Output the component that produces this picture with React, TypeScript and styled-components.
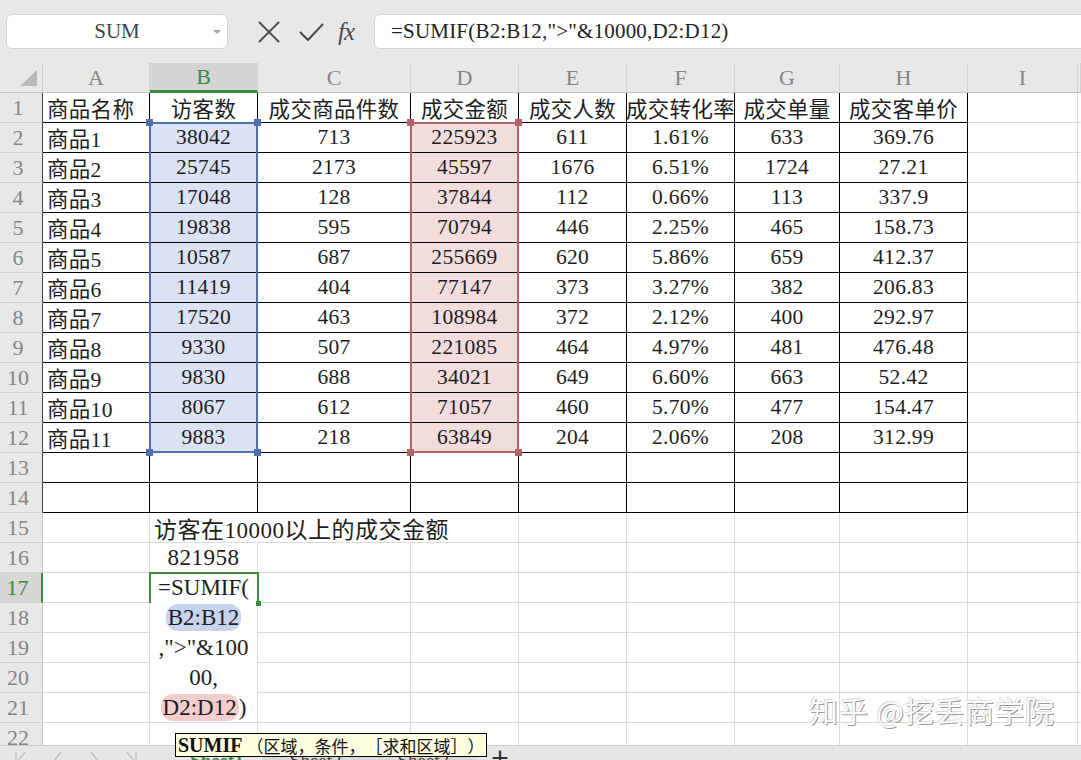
import React from 'react';
import styled, { createGlobalStyle } from 'styled-components';

const GlobalStyle = createGlobalStyle`
  html, body {
    margin: 0;
    padding: 0;
    background: #fff;
    overflow: hidden;
  }
  body {
    font-family: "Liberation Serif", "Noto Sans CJK SC", serif;
  }
`;

const COLS = [107, 108, 153, 108, 108, 108, 105, 128, 110];
const LETTERS = ['A', 'B', 'C', 'D', 'E', 'F', 'G', 'H', 'I'];
const HEAD_W = 43;
const HEAD_H = 30;
const ROW_H = 30;
const GRID = '#dadada';
const INK = '#1e1e1e';
const GREEN = '#3d8b40';
const BLUE = '#4f6fb3';
const BLUE_FILL = '#dae2f3';
const RED = '#b3646a';
const RED_FILL = '#f3dcdc';

const colLeft = (c: number): number => HEAD_W + COLS.slice(0, c).reduce((a, b) => a + b, 0);
const rowTop = (r: number): number => HEAD_H + (r - 1) * ROW_H;

const ROWS = [
  ['商品名称', '访客数', '成交商品件数', '成交金额', '成交人数', '成交转化率', '成交单量', '成交客单价'],
  ['商品1', '38042', '713', '225923', '611', '1.61%', '633', '369.76'],
  ['商品2', '25745', '2173', '45597', '1676', '6.51%', '1724', '27.21'],
  ['商品3', '17048', '128', '37844', '112', '0.66%', '113', '337.9'],
  ['商品4', '19838', '595', '70794', '446', '2.25%', '465', '158.73'],
  ['商品5', '10587', '687', '255669', '620', '5.86%', '659', '412.37'],
  ['商品6', '11419', '404', '77147', '373', '3.27%', '382', '206.83'],
  ['商品7', '17520', '463', '108984', '372', '2.12%', '400', '292.97'],
  ['商品8', '9330', '507', '221085', '464', '4.97%', '481', '476.48'],
  ['商品9', '9830', '688', '34021', '649', '6.60%', '663', '52.42'],
  ['商品10', '8067', '612', '71057', '460', '5.70%', '477', '154.47'],
  ['商品11', '9883', '218', '63849', '204', '2.06%', '208', '312.99'],
];

const Page = styled.div`
  position: relative;
  width: 1081px;
  height: 760px;
  overflow: hidden;
  display: flex;
  flex-direction: column;
  background: #fff;
`;

const Toolbar = styled.div`
  height: 63px;
  flex: none;
  display: flex;
  align-items: center;
  padding-left: 6px;
  background: #e8e8e8;
`;

const NameBox = styled.div`
  position: relative;
  box-sizing: border-box;
  width: 222px;
  height: 35px;
  background: #fff;
  border: 1px solid #d4d4d4;
  border-radius: 6px;
  display: flex;
  align-items: center;
  justify-content: center;
  font-size: 21px;
  color: #444;
`;

const DropArrow = styled.span`
  position: absolute;
  right: 6px;
  top: 15px;
  width: 0;
  height: 0;
  border-left: 4px solid transparent;
  border-right: 4px solid transparent;
  border-top: 4px solid #a8a8a8;
`;

const ToolIcon = styled.svg<{ $gap: number }>`
  flex: none;
  margin-left: ${p => p.$gap}px;
`;

const Fx = styled.span`
  margin-left: 14px;
  width: 24px;
  font-size: 25px;
  font-style: italic;
  color: #4a4a4a;
  letter-spacing: -1px;
`;

const FormulaBox = styled.div`
  flex: 1;
  box-sizing: border-box;
  height: 35px;
  margin-left: 12px;
  margin-right: -8px;
  padding-left: 16px;
  background: #fff;
  border: 1px solid #d4d4d4;
  border-radius: 6px;
  display: flex;
  align-items: center;
  font-size: 21px;
  letter-spacing: 0.2px;
  color: #222;
  white-space: nowrap;
`;

const SheetArea = styled.div`
  position: relative;
  flex: none;
  height: 682px;
  overflow: hidden;
`;

const Grid = styled.div`
  display: grid;
  grid-template-columns: ${HEAD_W}px ${COLS.map(w => `${w}px`).join(' ')} 1fr;
  grid-auto-rows: ${ROW_H}px;
`;

const Corner = styled.div`
  box-sizing: border-box;
  background: #e8e8e8;
  border-right: 1px solid #cfcfcf;
  border-bottom: 1px solid #c4c4c4;
  display: flex;
  align-items: flex-end;
  justify-content: flex-end;
  padding: 0 5px 6px 0;
`;

const ColHead = styled.div<{ $active?: boolean }>`
  box-sizing: border-box;
  background: ${p => (p.$active ? '#d4d4d4' : '#e8e8e8')};
  border-right: 1px solid #d2d2d2;
  border-bottom: ${p => (p.$active ? `3px solid ${GREEN}` : '1px solid #c4c4c4')};
  display: flex;
  align-items: center;
  justify-content: center;
  font-size: 22px;
  color: ${p => (p.$active ? GREEN : '#858585')};
`;

const RowHead = styled.div<{ $active?: boolean; $dark?: boolean }>`
  box-sizing: border-box;
  background: ${p => (p.$active ? '#d6d6d6' : '#e8e8e8')};
  border-bottom: 1px solid #d2d2d2;
  border-right: ${p => (p.$active ? `2px solid ${GREEN}` : `1px solid ${p.$dark ? '#444' : '#c4c4c4'}`)};
  display: flex;
  align-items: center;
  justify-content: center;
  padding-right: 6px;
  font-size: 22px;
  color: ${p => (p.$active ? GREEN : '#858585')};
`;

const Cell = styled.div<{ $right: string; $bottom: string; $left?: boolean; $fill?: string; $big?: boolean; $over?: boolean }>`
  position: relative;
  z-index: ${p => (p.$over ? 2 : 'auto')};
  box-sizing: border-box;
  border-right: 1px solid ${p => p.$right};
  border-bottom: 1px solid ${p => p.$bottom};
  background: ${p => p.$fill || '#fff'};
  display: flex;
  align-items: center;
  justify-content: ${p => (p.$left ? 'flex-start' : 'center')};
  padding: 0 ${p => (p.$left ? '4px' : '0')};
  font-size: ${p => (p.$big ? 23 : 21.5)}px;
  letter-spacing: ${p => (p.$big ? '0.5px' : '0.3px')};
  color: ${INK};
  white-space: nowrap;
  overflow: visible;
`;

const RangeFrame = styled.div<{ $color: string }>`
  position: absolute;
  z-index: 3;
  box-sizing: border-box;
  border: 2px solid ${p => p.$color};
  pointer-events: none;
`;

const Handle = styled.span<{ $color: string; $x: 'l' | 'r'; $y: 't' | 'b' }>`
  position: absolute;
  width: 7px;
  height: 7px;
  background: ${p => p.$color};
  ${p => (p.$x === 'l' ? 'left: -5px;' : 'right: -5px;')}
  ${p => (p.$y === 't' ? 'top: -5px;' : 'bottom: -5px;')}
`;

const Editor = styled.div`
  position: absolute;
  z-index: 4;
  box-sizing: border-box;
  background: #fff;
  border-right: 1px solid ${GRID};
  font-size: 23px;
  color: ${INK};
`;

const EditLine = styled.div`
  height: 30px;
  line-height: 30px;
  text-align: center;
  white-space: nowrap;
`;

const Ref = styled.span<{ $tone: string }>`
  background: ${p => p.$tone};
  border-radius: 12px;
  padding: 1px 2px;
`;

const ActiveFrame = styled.div`
  position: absolute;
  z-index: 5;
  box-sizing: border-box;
  border: 2px solid ${GREEN};
  border-bottom: none;
  pointer-events: none;
`;

const ActiveHandle = styled.span`
  position: absolute;
  right: -4px;
  bottom: -3px;
  width: 5px;
  height: 5px;
  background: ${GREEN};
`;

const Watermark = styled.div`
  position: absolute;
  z-index: 6;
  right: 26px;
  bottom: 14px;
  font-family: "Noto Sans CJK SC", sans-serif;
  font-size: 29px;
  letter-spacing: 1px;
  color: #fbfbfb;
  text-shadow: 1px 1px 0 #9c9c9c, -1px -1px 0 #dedede;
`;

const TabBar = styled.div`
  flex: none;
  height: 40px;
  box-sizing: border-box;
  background: #e6e6e6;
  border-top: 1px solid #cdcdcd;
  display: flex;
  align-items: flex-start;
  padding: 4px 0 0 14px;
`;

const NavGroup = styled.div`
  display: flex;
  gap: 20px;
  width: 150px;
`;

const Tab = styled.div<{ $active?: boolean }>`
  padding: ${p => (p.$active ? '0 18px' : '0 28px')};
  height: 30px;
  font-size: 19px;
  font-weight: ${p => (p.$active ? 700 : 400)};
  color: ${p => (p.$active ? GREEN : '#444')};
  background: ${p => (p.$active ? '#e6e6e6' : '#d9d9d9')};
  margin-left: ${p => (p.$active ? '8px' : '0')};
`;

const AddTab = styled.div`
  margin: -3px 0 0 14px;
  font-family: "Liberation Sans", sans-serif;
  font-size: 30px;
  font-weight: 300;
  line-height: 22px;
  color: #333;
`;

const Tip = styled.div`
  position: absolute;
  z-index: 10;
  left: 175px;
  top: 733px;
  height: 24px;
  box-sizing: border-box;
  background: #ffffe1;
  border: 1px solid #000;
  padding: 0 2px;
  display: flex;
  align-items: center;
  white-space: nowrap;
  font-size: 17px;
  color: #111;
  text-spacing-trim: space-all;
`;

const TipName = styled.b`
  font-size: 20px;
  margin-right: 4px;
`;

function Chevron({ double, flip }: { double?: boolean; flip?: boolean }): JSX.Element {
  return (
    <svg width="16" height="22" viewBox="0 0 16 22" style={{ transform: flip ? 'scaleX(-1)' : undefined }}>
      <polyline points="11,2 4,11 11,20" fill="none" stroke="#c4c4c4" strokeWidth="1.5" />
      {double && <line x1="2" y1="2" x2="2" y2="20" stroke="#c4c4c4" strokeWidth="1.5" />}
    </svg>
  );
}

function App(): JSX.Element {
  const renderCell = (r: number, c: number): JSX.Element => {
    const inTable = r <= 14 && c <= 7;
    let right = inTable ? '#000' : GRID;
    const bottom = inTable ? '#000' : GRID;
    if (r === 15 && (c === 1 || c === 2)) right = 'transparent';
    let text = '';
    if (r <= 12 && c <= 7) text = ROWS[r - 1][c];
    if (r === 15 && c === 1) text = '访客在10000以上的成交金额';
    if (r === 16 && c === 1) text = '821958';
    let fill: string | undefined;
    if (r >= 2 && r <= 12 && c === 1) fill = BLUE_FILL;
    if (r >= 2 && r <= 12 && c === 3) fill = RED_FILL;
    return (
      <Cell
        key={`${r}-${c}`}
        $right={right}
        $bottom={bottom}
        $left={c === 0 || (r === 15 && c === 1)}
        $fill={fill}
        $big={r >= 15}
        $over={r === 15 && c === 1}
      >
        {text}
      </Cell>
    );
  };

  const ranges = [
    { c: 1, color: BLUE },
    { c: 3, color: RED },
  ];

  return (
    <Page>
      <GlobalStyle />
      <Toolbar>
        <NameBox>
          SUM
          <DropArrow />
        </NameBox>
        <ToolIcon $gap={30} width="22" height="22" viewBox="0 0 22 22">
          <line x1="1" y1="1" x2="21" y2="21" stroke="#4a4a4a" strokeWidth="1.8" />
          <line x1="21" y1="1" x2="1" y2="21" stroke="#4a4a4a" strokeWidth="1.8" />
        </ToolIcon>
        <ToolIcon $gap={19} width="25" height="20" viewBox="0 0 25 20">
          <polyline points="1,10 9,18 24,2" fill="none" stroke="#4a4a4a" strokeWidth="2" />
        </ToolIcon>
        <Fx>fx</Fx>
        <FormulaBox>=SUMIF(B2:B12,"&gt;"&amp;10000,D2:D12)</FormulaBox>
      </Toolbar>

      <SheetArea>
        <Grid>
          <Corner>
            <svg width="17" height="16" viewBox="0 0 17 16">
              <polygon points="17,0 17,16 0,16" fill="#b8b8b8" />
            </svg>
          </Corner>
          {LETTERS.map((l, i) => (
            <ColHead key={l} $active={i === 1}>
              {l}
            </ColHead>
          ))}
          <ColHead />
          {Array.from({ length: 22 }, (_, i) => {
            const r = i + 1;
            return (
              <React.Fragment key={r}>
                <RowHead $active={r === 17} $dark={r <= 14}>
                  {r}
                </RowHead>
                {LETTERS.map((_l, c) => renderCell(r, c))}
                <Cell $right="transparent" $bottom={GRID} />
              </React.Fragment>
            );
          })}
        </Grid>

        {ranges.map(rg => (
          <RangeFrame
            key={rg.c}
            $color={rg.color}
            style={{ left: colLeft(rg.c) - 1, top: rowTop(2) - 1, width: COLS[rg.c] + 1, height: ROW_H * 11 + 1 }}
          >
            <Handle $color={rg.color} $x="l" $y="t" />
            <Handle $color={rg.color} $x="r" $y="t" />
            <Handle $color={rg.color} $x="l" $y="b" />
            <Handle $color={rg.color} $x="r" $y="b" />
          </RangeFrame>
        ))}

        <Editor style={{ left: colLeft(1), top: rowTop(17), width: COLS[1], height: ROW_H * 5 - 1 }}>
          <EditLine>=SUMIF(</EditLine>
          <EditLine>
            <Ref $tone="#c8d4ee">B2:B12</Ref>
          </EditLine>
          <EditLine>,"&gt;"&amp;100</EditLine>
          <EditLine>00,</EditLine>
          <EditLine>
            <Ref $tone="#f2cdcd">D2:D12</Ref>)
          </EditLine>
        </Editor>
        <ActiveFrame style={{ left: colLeft(1) - 1, top: rowTop(17) - 1, width: COLS[1] + 2, height: ROW_H + 1 }}>
          <ActiveHandle />
        </ActiveFrame>

        <Watermark>知乎 @挖丢商学院</Watermark>
      </SheetArea>

      <TabBar>
        <NavGroup>
          <Chevron double />
          <Chevron />
          <Chevron flip />
          <Chevron double flip />
        </NavGroup>
        <Tab $active>Sheet1</Tab>
        <Tab>Sheet2</Tab>
        <Tab>Sheet3</Tab>
        <AddTab>+</AddTab>
      </TabBar>

      <Tip>
        <TipName>SUMIF</TipName>（区域，条件，［求和区域］）
      </Tip>
    </Page>
  );
}

export default App;
